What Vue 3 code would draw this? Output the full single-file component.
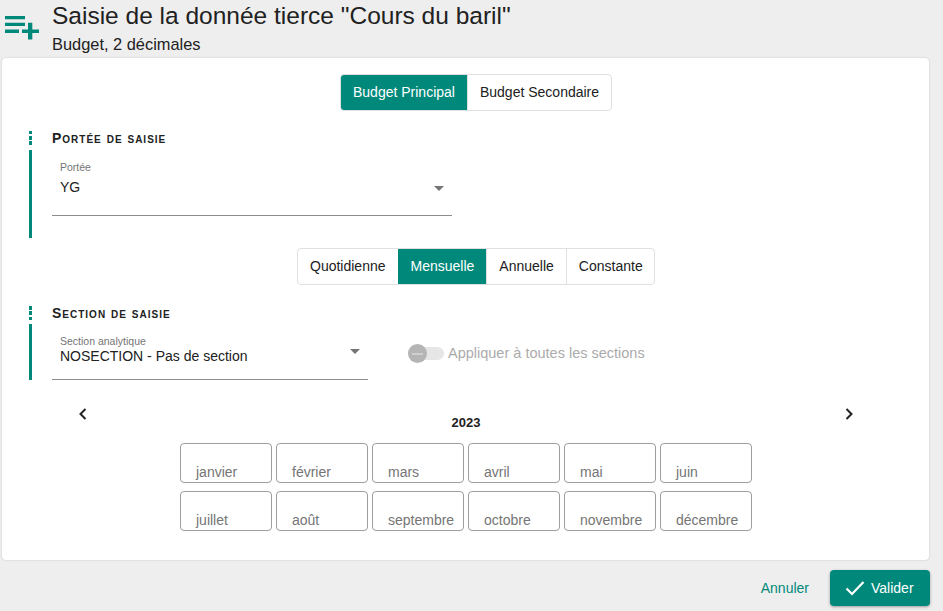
<script setup>
const months = ['janvier','février','mars','avril','mai','juin','juillet','août','septembre','octobre','novembre','décembre']
</script>

<template>
  <div class="page">
    <header class="head">
      <svg class="head-icon" width="36" height="28" viewBox="0 0 36 28">
        <path d="M0 2h20v3.300H0zM0 8.700h20V12H0zM0 15.500h14V19H0zM23 8.700h4.300v6.800H34V19h-6.700v6.500H23V19h-6v-3.500h6z" fill="#00897b"/>
      </svg>
      <div class="head-text">
        <h1>Saisie de la donnée tierce "Cours du baril"</h1>
        <p>Budget, 2 décimales</p>
      </div>
    </header>

    <main class="card">
      <div class="seg seg-top">
        <span class="on">Budget Principal</span>
        <span>Budget Secondaire</span>
      </div>

      <section class="sec sec-one">
        <div class="sec-title"><i class="dots"></i><h2>Portée de saisie</h2></div>
        <div class="sec-body">
          <div class="field field-one">
            <label>Portée</label>
            <div class="value">YG</div>
            <i class="caret"></i>
          </div>
        </div>
      </section>

      <div class="seg seg-mid">
        <span>Quotidienne</span>
        <span class="on">Mensuelle</span>
        <span>Annuelle</span>
        <span>Constante</span>
      </div>

      <section class="sec sec-two">
        <div class="sec-title"><i class="dots"></i><h2>Section de saisie</h2></div>
        <div class="sec-body row">
          <div class="field field-two">
            <label>Section analytique</label>
            <div class="value">NOSECTION - Pas de section</div>
            <i class="caret"></i>
          </div>
          <div class="switch">
            <span class="track"><span class="thumb"></span></span>
            <span class="switch-label">Appliquer à toutes les sections</span>
          </div>
        </div>
      </section>

      <div class="cal-nav">
        <svg width="10" height="12" viewBox="0 0 10 12"><path d="M7.500 1 2.500 6l5 5" fill="none" stroke="#222" stroke-width="2"/></svg>
        <svg width="10" height="12" viewBox="0 0 10 12"><path d="M2.500 1l5 5-5 5" fill="none" stroke="#222" stroke-width="2"/></svg>
      </div>
      <div class="year">2023</div>
      <div class="months">
        <div v-for="m in months" :key="m" class="month">{{ m }}</div>
      </div>
    </main>

    <footer class="foot">
      <button class="cancel">Annuler</button>
      <button class="ok">
        <svg width="20" height="16" viewBox="0 0 20 16"><path d="M1.500 8.500l5.500 5.500L18.500 2" fill="none" stroke="#fff" stroke-width="2.200"/></svg>
        Valider
      </button>
    </footer>
  </div>
</template>

<style>
html, body { margin: 0; background: #eeeeee; }
</style>

<style scoped>
.page {
  width: 943px; height: 611px; background: #eee; overflow: hidden;
  display: flex; flex-direction: column;
  font-family: "Liberation Sans", Arial, sans-serif; color: #212121;
}
.head { height: 58px; display: flex; box-sizing: border-box; padding-left: 5px; }
.head-icon { margin-top: 14px; flex: none; }
.head-text { margin-left: 11px; }
h1 { margin: 0; font-weight: 400; font-size: 24.5px; line-height: 32px; }
.head p { margin: 0; font-size: 16.400px; line-height: 25px; }
.card {
  width: 927px; height: 502px; margin-left: 2px; background: #fff; border-radius: 4px;
  box-shadow: 0 0 2px rgba(0,0,0,.2); box-sizing: border-box; padding-top: 16px;
  display: flex; flex-direction: column; flex: none;
}
.seg {
  align-self: flex-start; display: flex; height: 37px; box-sizing: border-box;
  border: 1px solid #e0e0e0; border-radius: 4px; overflow: hidden; font-size: 14px;
}
.seg span { display: flex; align-items: center; padding: 0 12px 2px; border-left: 1px solid #e0e0e0; }
.seg span:first-child { border-left: 0; }
.seg .on { background: #00897b; color: #fff; border-left-color: #00897b; }
.seg-top { margin-left: 338px; }
.seg-mid { margin-left: 295px; margin-top: 10px; }
.seg-mid span:last-child { padding-right: 11px; }
.sec-one { margin-top: 20px; }
.sec-one .sec-body { padding-bottom: 22px; }
.sec-two { margin-top: 21px; }
.sec { margin-left: 27px; }
.sec-title { display: flex; height: 14px; align-items: center; }
.dots {
  width: 3px; height: 14px; flex: none;
  background: repeating-linear-gradient(#00897b 0 3.500px, transparent 3.500px 5.250px);
}
h2 { margin: 0 0 0 20px; font-size: 14px; font-weight: 700; font-variant: small-caps; letter-spacing: 1px; line-height: 14px; }
.sec-body { border-left: 3px solid #00897b; margin-top: 5px; padding-left: 20px; }
.sec-two .sec-body { margin-top: 4px; }
.row { display: flex; }
.field { position: relative; border-bottom: 1px solid #8c8c8c; box-sizing: border-box; }
.field-one { width: 400px; height: 66px; padding: 11px 8px 0; }
.field-two { width: 316px; height: 56px; padding: 11px 8px 0; }
.field label { display: block; font-size: 10.500px; line-height: 12px; color: #757575; }
.value { font-size: 14px; line-height: 18px; color: #212121; }
.field-one .value { margin-top: 5px; }
.field-two .value { margin-top: 0; }
.caret {
  position: absolute; width: 0; height: 0; right: 8px;
  border: 5px solid transparent; border-top: 5px solid #757575; border-bottom: 0;
}
.field-one .caret { top: 36px; }
.field-two .caret { top: 25px; right: 8px; }
.switch { display: flex; align-items: flex-start; margin-left: 40px; padding-top: 20px; }
.track { position: relative; width: 36px; height: 13px; margin-top: 3px; background: #e6e6e6; border-radius: 7px; }
.thumb {
  position: absolute; left: 0; top: -3px; width: 19px; height: 19px; border-radius: 50%; background: #b5b5b5;
}
.thumb::after { content: ""; position: absolute; left: 4px; right: 4px; top: 8.500px; height: 2px; background: #cfcfcf; }
.switch-label { margin-left: 4px; font-size: 14.500px; line-height: 18px; color: #ababab; }
.cal-nav { display: flex; justify-content: space-between; margin: 28px 75px 0 76px; height: 12px; }
.year { text-align: center; font-size: 13px; font-weight: 700; line-height: 14px; margin-top: -4px; margin-left: 1px; }
.months {
  display: grid; grid-template-columns: repeat(6, 92px); grid-auto-rows: 40px; gap: 8px 4px;
  margin: 13px 0 0 178px;
}
.month {
  box-sizing: border-box; border: 1px solid #9e9e9e; border-radius: 4px;
  padding: 20px 0 0 15px; font-size: 14px; line-height: 16px; color: #757575; white-space: nowrap;
}
.foot { display: flex; justify-content: flex-end; align-items: flex-start; padding: 10px 13px 0 0; }
button { font-family: inherit; border: 0; }
.cancel { background: none; color: #00897b; font-size: 14px; height: 36px; padding: 0; margin-right: 21px; }
.ok {
  width: 100px; height: 36px; background: #00897b; color: #fff; font-size: 14px; border-radius: 4px;
  display: flex; align-items: center; padding: 0 0 0 15px; gap: 6px; box-shadow: 0 1px 3px rgba(0,0,0,.35);
}
</style>
